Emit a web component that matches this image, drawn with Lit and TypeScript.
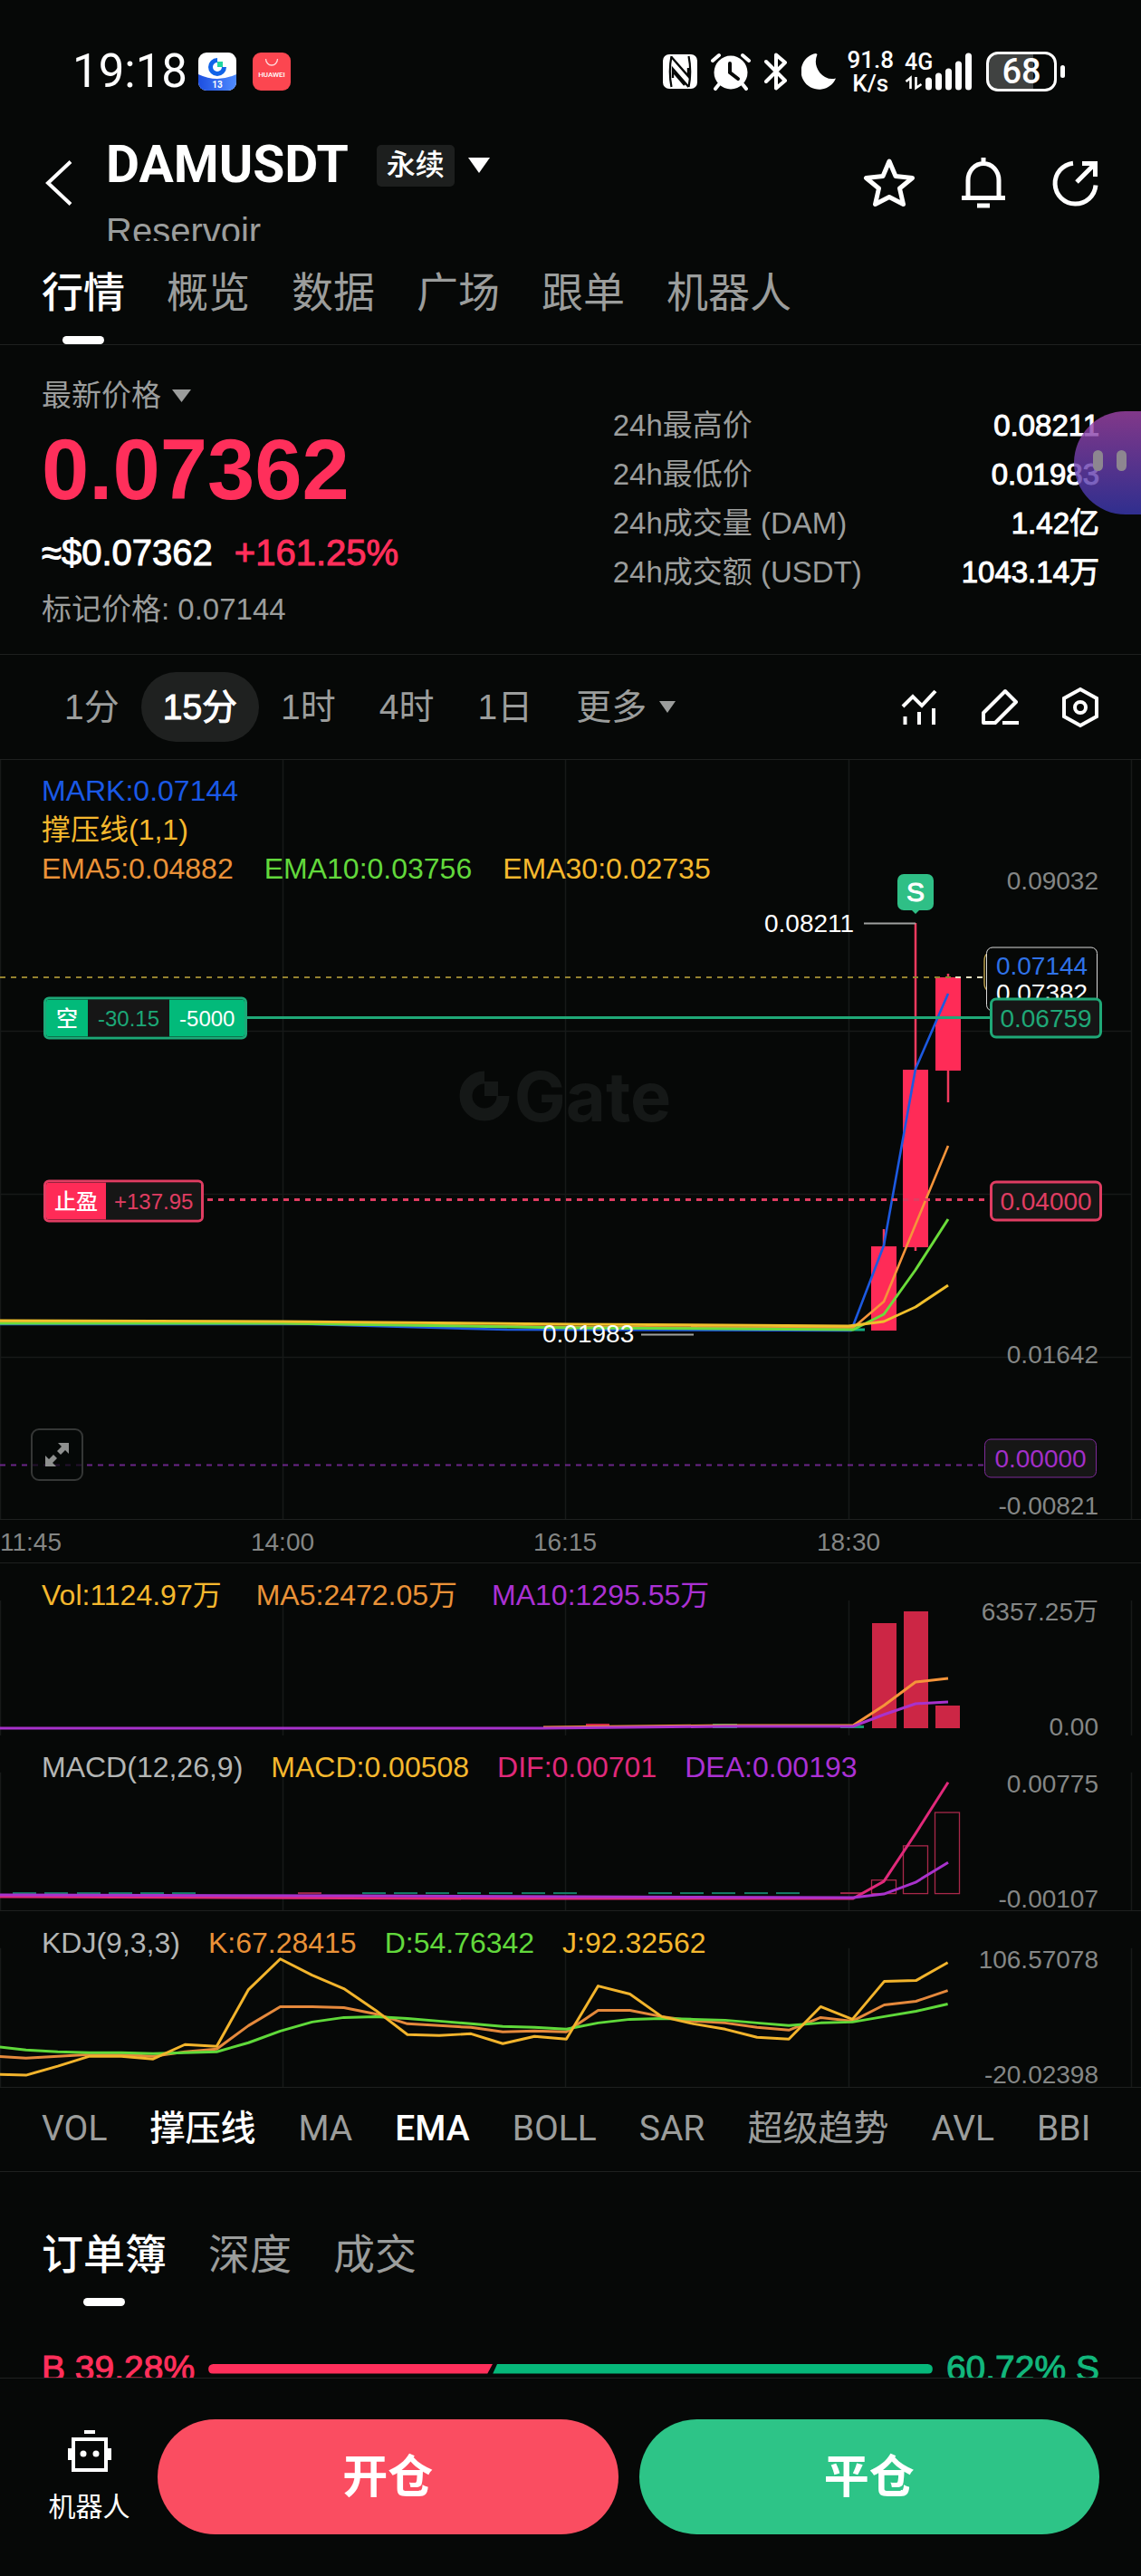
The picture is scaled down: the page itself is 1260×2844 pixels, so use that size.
import { LitElement, html, svg, css, nothing } from "lit";
import { customElement, state } from "lit/decorators.js";
import { classMap } from "lit/directives/class-map.js";
import { styleMap } from "lit/directives/style-map.js";

type Point = [number, number];

const points = (list: Point[]) => list.map((p) => p.join(",")).join(" ");

/* Horizontal distance between two candles, and the centre of the newest one. */
const STEP = 35.1;
const LAST_X = 1046.6;
const series = (values: number[]): Point[] =>
  values.map((y, i) => [Math.round((LAST_X - STEP * (values.length - 1 - i)) * 10) / 10, y]);

const GRID_X = [0, 312, 624, 937, 1249];

interface Candle { x: number; top: number; bottom: number; high: number; low: number }
const CANDLES: Candle[] = [
  { x: 976, top: 537, bottom: 630, high: 518, low: 630 },
  { x: 1011, top: 342, bottom: 538, high: 180, low: 542 },
  { x: 1047, top: 240, bottom: 343, high: 236, low: 378 },
];

const VOLUME_BARS = [
  { x: 976, top: 66 },
  { x: 1011, top: 53 },
  { x: 1046, top: 157 },
];

const MACD_BARS = [
  { x: 976, top: 160 },
  { x: 1011, top: 122 },
  { x: 1046, top: 85 },
];
const MACD_GREEN = [14, 49, 85, 120, 155, 190, 400, 435, 470, 505, 540, 576, 611, 716, 751, 786, 822, 857];
const MACD_RED = [329, 928];

const KDJ_J = series([181, 182, 172, 161, 161, 164, 148, 150, 87, 53, 71, 86, 110, 137, 138, 136, 147, 139, 142, 83, 92, 117, 125, 131, 140, 142, 106, 120, 78, 77, 57]);
const KDJ_K = series([161, 163, 161, 159, 159, 161, 156, 153, 127, 106, 106, 107, 114, 125, 127, 129, 134, 133, 134, 110, 110, 117, 122, 124, 129, 132, 118, 122, 104, 100, 88]);
const KDJ_D = series([150, 154, 156, 157, 157, 158, 157, 156, 146, 133, 123, 118, 117, 119, 122, 125, 128, 129, 131, 124, 120, 119, 120, 121, 124, 127, 124, 123, 117, 111, 103]);

interface Legend { text: string; tone: string }

@customElement("app-root")
export class AppRoot extends LitElement {
  @state() private page = "行情";
  @state() private interval = "15分";
  @state() private book = "订单簿";
  @state() private indicators = ["撑压线", "EMA"];

  static styles = css`
    :host {
      display: block;
      min-height: 100vh;
      background: #060807;
      color: #fff;
      font-family: "Liberation Sans", "Noto Sans CJK SC", sans-serif;
      font-size: 33px;
      line-height: 40px;
      overflow-x: hidden;
    }
    * { box-sizing: border-box; }
    button, a { font: inherit; color: inherit; text-decoration: none; }
    button { background: none; border: 0; padding: 0; margin: 0; cursor: pointer; }
    h1, p, dl, dd, dt { margin: 0; font: inherit; }
    svg { display: block; flex: none; }
    .row { display: flex; align-items: center; }
    .medium { -webkit-text-stroke: 1px currentColor; }
    .gray { color: #9b9d9c; }
    .red { color: #ff2f5b; }

    .status {
      height: 138px;
      padding: 56px 84px 36px 80px;
      display: flex;
      justify-content: space-between;
      font-family: Roboto, sans-serif;
    }
    .status-side { display: flex; align-items: center; height: 46px; }
    .clock { font-size: 51px; line-height: 46px; margin-right: 12px; }
    .app-icons { display: flex; gap: 18px; }
    .status-icons { display: flex; align-items: center; gap: 15px; }
    .rate { font-size: 26px; line-height: 26px; text-align: center; font-weight: 500; margin: 0 12px; }
    .signal { display: flex; align-items: center; margin-right: 14px; position: relative; }
    .network { position: absolute; left: 0; top: 0; font-size: 25px; line-height: 22px; font-weight: 500; }
    .battery { display: flex; align-items: center; gap: 4px; }
    .battery-shell {
      width: 78px; height: 44px; border: 3px solid #fff; border-radius: 13px;
      background: linear-gradient(90deg, #404241 68%, #060807 68%);
      font-size: 38px; line-height: 38px; font-weight: 500; text-align: center;
    }
    .battery-tip { width: 5px; height: 14px; border-radius: 3px; background: #fff; }

    .header { display: flex; height: 128px; padding: 0 47px 0 49px; align-items: center; }
    .names { align-self: flex-start; padding: 16px 0 0 36px; flex: 1; overflow: hidden; height: 100%; }
    .title { display: flex; align-items: center; height: 56px; }
    .symbol { font-family: Roboto, sans-serif; font-weight: 700; font-size: 57px; line-height: 56px; }
    .badge {
      margin: 2px 15px 0 31px; height: 46px; padding: 0 11px; border-radius: 5px; background: #1d1f1e;
      font-size: 32px; line-height: 44px; font-weight: 500;
    }
    .alias { margin-top: 22px; height: 34px; overflow: hidden; font-size: 40px; line-height: 46px; color: #9b9d9c; }
    .header-actions { display: flex; gap: 51px; align-items: center; }

    .tabs { display: flex; gap: 46px; padding: 0 46px; height: 114px; }
    .tab { position: relative; font-size: 46px; line-height: 112px; color: #9b9d9c; white-space: nowrap; font-weight: 400; }
    .tab.on { color: #fff; font-weight: 500; }
    .tab.on::after {
      content: ""; position: absolute; left: 50%; bottom: 0; width: 46px; height: 9px;
      margin-left: -23px; border-radius: 5px; background: #fff;
    }
    .ruled { border-bottom: 1px solid #1e201f; }

    .quote {
      position: relative; display: grid; grid-template-columns: 54fr 46fr;
      padding: 36px 46px 29px;
    }
    .quote-kind { display: flex; align-items: center; gap: 12px; height: 40px; font-size: 33px; }
    .price { margin: 14px 0 20px; font-size: 94px; line-height: 96px; font-weight: 700; }
    .change { display: flex; gap: 24px; font-size: 40px; line-height: 46px; margin-bottom: 20px; }
    .stats { padding-top: 26px; }
    .stat { display: flex; justify-content: space-between; line-height: 54px; }
    .bubble {
      position: absolute; right: 0; top: 73px; width: 74px; height: 114px;
      border-radius: 57px 0 0 57px;
      background: linear-gradient(180deg, rgba(160, 68, 170, 0.8), rgba(58, 56, 176, 0.8));
      display: flex; align-items: center; gap: 15px; padding: 0 0 5px 21px;
    }
    .eye { width: 11px; height: 23px; border-radius: 6px; background: #8d8690; }

    .intervals { display: flex; align-items: center; justify-content: space-between; height: 116px; padding: 0 47px; }
    .interval { height: 77px; padding: 0 24px; border-radius: 39px; font-size: 39px; color: #9b9d9c; display: inline-flex; align-items: center; gap: 14px; }
    .interval.on { background: #1f2120; color: #fff; }
    .tools { display: flex; gap: 48px; }

    .panel { position: relative; }
    .panel .plot { position: absolute; left: 0; top: 0; width: 100%; height: 100%; }
    .legends { position: relative; padding: 15px 46px 0; font-size: 32px; }
    .legend { display: flex; gap: 34px; line-height: 40px; }
    .legend-rows { padding-top: 13px; }
    .legend-rows .legend { line-height: 43px; }
    .volume-panel .legend { gap: 38px; }
    .macd-panel .legend, .kdj-panel .legend { gap: 31px; }
    .blue { color: #1a59e6; }
    .gold { color: #f5b82e; }
    .orange { color: #ea9238; }
    .green { color: #62d93c; }
    .violet { color: #ab31d4; }
    .pink { color: #e0297a; }
    .light { color: #b4b6b5; }
    .scale { position: absolute; right: 47px; font-size: 28px; line-height: 28px; margin-top: -14px; color: #848685; }

    .price-panel { height: 839px; }
    .mark { position: absolute; transform: translateY(-50%); display: flex; align-items: center; font-size: 28px; line-height: 28px; }
    .price-box { right: 43px; width: 124px; height: 45px; justify-content: center; border: 3px solid; border-radius: 7px; background: #161616; }
    .price-box.thin { right: 49px; border-width: 1px; }
    .price-box.up { color: #1fa877; }
    .price-box.down { color: #e03d62; }
    .price-box.zero { color: #a32fc9; border-color: #7d2a98; height: 43px; }
    .twin { right: 48px; width: 123px; height: 71px; border: 1px solid #d9d9d9; border-radius: 7px; background: #060807; flex-direction: column; padding-top: 6px; gap: 2px; }
    .twin .last { color: #2f72e8; }
    .tag { left: 48px; height: 47px; border: 3px solid; border-radius: 6px; font-size: 24px; overflow: hidden; }
    .tag span { display: flex; align-items: center; height: 100%; padding: 0 9px; }
    .tag .solid { color: #fff; font-weight: 500; }
    .tag .hollow { background: #161616; }
    .tag.up { color: #1ca877; }
    .tag.up span { padding: 0 11px; }
    .tag.up .solid { background: #02ba7a; }
    .tag.down { color: #e03d62; }
    .tag.down .solid { background: #ff2b57; }
    .sell {
      left: 991px; top: 146px; width: 40px; height: 40px; border-radius: 7px; background: #2fbf86;
      justify-content: center; font-size: 30px;
    }
    .sell::after {
      content: ""; position: absolute; left: 15px; top: 39px;
      border: 5px solid transparent; border-top-color: #2fbf86; border-bottom: 0;
    }
    .watermark { position: absolute; left: 0; right: 0; top: 329px; height: 84px; display: flex; align-items: center; justify-content: center; gap: 5px; padding-right: 12px; color: #151817; font: 700 76px/84px Inter, sans-serif; }
    .expand {
      position: absolute; left: 34px; top: 738px; width: 58px; height: 58px; border: 2px solid #353736; border-radius: 9px;
      background: rgba(6, 8, 7, 0.7); display: flex; align-items: center; justify-content: center;
    }
    .times { position: relative; height: 48px; font-size: 28px; line-height: 49px; color: #848685; }
    .time { position: absolute; top: 0; transform: translateX(-50%); }
    .time.first { transform: none; }

    .volume-panel { height: 190px; }
    .macd-panel { height: 194px; }
    .kdj-panel { height: 195px; }

    .indicators { display: flex; align-items: center; gap: 47px; height: 93px; padding: 0 46px 2px; overflow: hidden; font-family: Roboto, "Noto Sans CJK SC", sans-serif; font-size: 39px; color: #9b9d9c; white-space: nowrap; }
    .indicator { flex: none; }
    .indicator.on { color: #fff; font-weight: 500; }

    .book { padding-top: 34px; }
    .depth-clip { margin-top: 45px; height: 34px; overflow: hidden; }
    .depth { display: flex; align-items: center; height: 48px; padding: 0 46px; gap: 15px; font-size: 39px; line-height: 48px; white-space: nowrap; }
    .depth-bar { flex: 1; display: flex; height: 11px; gap: 0; }
    .buy { background: #ff2f5b; border-radius: 6px 0 0 6px; clip-path: polygon(0 0, 100% 0, calc(100% - 6px) 100%, 0 100%); }
    .sell-side { flex: 1; background: #06b87a; border-radius: 0 6px 6px 0; clip-path: polygon(5px 0, 100% 0, 100% 100%, 0 100%); }
    .teal { color: #12b77c; }

    .dock { display: flex; align-items: center; gap: 23px; padding: 45px 46px 46px 46px; border-top: 1px solid #1e201f; }
    .bot { display: flex; flex-direction: column; align-items: center; width: 105px; gap: 18px; font-size: 30px; }
    .cta { flex: 1; height: 127px; border-radius: 64px; font-size: 50px; font-weight: 700; color: #fff; background: #fa4d61; }
    .cta.close { background: #2dc487; }
  `;

  private caret(width: number, height: number, color: string) {
    return html`<svg width=${width} height=${height} viewBox="0 0 10 10" preserveAspectRatio="none" aria-hidden="true">
      <path d="M0 0H10L5 10Z" fill=${color}></path></svg>`;
  }

  private gridLines(from: number, to: number) {
    return svg`${GRID_X.map((x) => svg`<path d=${`M${x + 0.5} ${from}V${to}`} stroke="#171918" stroke-width="1.5"></path>`)}`;
  }

  private line(list: Point[], color: string, width = 3) {
    return svg`<polyline points=${points(list)} fill="none" stroke=${color} stroke-width=${width} stroke-linejoin="round"></polyline>`;
  }

  private legend(items: Legend[]) {
    return html`<div class="legend">${items.map((i) => html`<span class=${i.tone}>${i.text}</span>`)}</div>`;
  }

  private scale(text: string, y: number) {
    return html`<span class="scale" style=${styleMap({ top: `${y}px` })}>${text}</span>`;
  }

  private tabs(names: string[], current: string, pick: (name: string) => void) {
    return html`${names.map((name) => html`<button
      class=${classMap({ tab: true, on: name === current })} role="tab" aria-selected=${name === current}
      @click=${() => pick(name)}>${name}</button>`)}`;
  }

  private toggle(name: string) {
    this.indicators = this.indicators.includes(name)
      ? this.indicators.filter((n) => n !== name)
      : [...this.indicators, name];
  }

  private renderStatus() {
    return html`
      <div class="status">
        <div class="status-side">
          <span class="clock">19:18</span>
          <div class="app-icons">
            <svg width="42" height="42" viewBox="0 0 42 42" aria-hidden="true">
              <defs><clipPath id="tile"><rect width="42" height="42" rx="9"></rect></clipPath>
              <linearGradient id="sea"><stop stop-color="#1d4fe0"></stop><stop offset="1" stop-color="#4f8bff"></stop></linearGradient></defs>
              <g clip-path="url(#tile)"><rect width="42" height="42" fill="#fff"></rect>
              <path d="M0 24Q21 34 42 24V42H0Z" fill="url(#sea)"></path></g>
              <path d="M21 8.500A7.500 7.500 0 1 0 28.500 16" fill="none" stroke="#1164e8" stroke-width="5"></path>
              <rect x="21" y="10" width="6" height="6" fill="#22d6a0"></rect>
              <text x="21" y="39" text-anchor="middle" font-size="10" font-weight="700" font-family="Roboto" fill="#fff">13</text>
            </svg>
            <svg width="42" height="42" viewBox="0 0 42 42" aria-hidden="true">
              <rect width="42" height="42" rx="9" fill="#fc4650"></rect>
              <path d="M14.500 7a6.500 7 0 0 0 13 0" fill="none" stroke="#ffd9db" stroke-width="1.300"></path>
              <text x="21" y="27" text-anchor="middle" font-size="8" font-weight="500" font-family="Roboto" fill="#fff">HUAWEI</text>
            </svg>
          </div>
        </div>
        <div class="status-side">
          <div class="status-icons">
            <svg width="38" height="38" viewBox="0 0 38 38" aria-hidden="true">
              <rect width="38" height="38" rx="7" fill="#fff"></rect>
              <path d="M9.500 2C7.500 12 7.500 26 9.500 36M28.500 2C30.500 12 30.500 26 28.500 36" fill="none" stroke="#060807" stroke-width="2.200"></path>
              <path d="M9.500 3L28 24V15M28.500 36L11 16V26M12 20L24 34" fill="none" stroke="#060807" stroke-width="2.400"></path>
            </svg>
            <svg width="44" height="42" viewBox="0 0 44 42" aria-hidden="true">
              <circle cx="22" cy="22" r="18.500" fill="#fff"></circle>
              <path d="M2 9L9 3M42 9L35 3M9 35L5 40M35 35L39 40" stroke="#fff" stroke-width="4" stroke-linecap="round"></path>
              <path d="M21 12V22L30 29" fill="none" stroke="#060807" stroke-width="4" stroke-linecap="round"></path>
            </svg>
            <svg width="26" height="42" viewBox="0 0 26 42" aria-hidden="true">
              <path d="M2 10L23 31L13 39.500V2.500L23 11L2 32" fill="none" stroke="#fff" stroke-width="4" stroke-linejoin="round" stroke-linecap="round"></path>
            </svg>
            <svg width="38" height="40" viewBox="0 0 38 40" aria-hidden="true">
              <path d="M16 0A20 20 0 1 0 38 27.500Q28 30 20.500 21.500Q13 12 17.500 1Z" fill="#fff"></path>
            </svg>
          </div>
          <div class="rate"><div>91.8</div><div>K/s</div></div>
          <div class="signal">
            <span class="network">4G</span>
            <svg width="76" height="42" viewBox="0 0 76 42" aria-hidden="true">
              <path d="M26.500 31V38M37.500 26V38M48.500 21V38M59.500 13V38M70.500 4V38" stroke="#fff" stroke-width="7" stroke-linecap="round"></path>
              <path d="M1.500 32L6.500 28V40M18.500 35L12.500 39V27" fill="none" stroke="#fff" stroke-width="2.600"></path>
            </svg>
          </div>
          <div class="battery"><div class="battery-shell">68</div><div class="battery-tip"></div></div>
        </div>
      </div>`;
  }

  private renderHeader() {
    return html`
      <header class="header">
        <button aria-label="返回">
          <svg width="32" height="50" viewBox="0 0 32 50"><path d="M29 1.500L4 25L29 48.500" fill="none" stroke="#fff" stroke-width="4"></path></svg>
        </button>
        <div class="names">
          <div class="title">
            <h1 class="symbol">DAMUSDT</h1>
            <span class="badge">永续</span>
            ${this.caret(24, 17, "#fff")}
          </div>
          <p class="alias">Reservoir</p>
        </div>
        <div class="header-actions">
          <button aria-label="收藏"><svg width="58" height="58" viewBox="0 0 58 58">
            <path d="M29 5L36 21.500L54.500 23.500L40.500 35L44.500 52.500L29 44.500L13.500 52.500L17.500 35L3.500 23.500L22 21.500Z" fill="none" stroke="#fff" stroke-width="5" stroke-linejoin="round"></path></svg></button>
          <button aria-label="提醒"><svg width="48" height="58" viewBox="0 0 48 58">
            <path d="M24 1V7M7 45V26A17 18.500 0 0 1 41 26V45M0 45.500H48M17 54H31" fill="none" stroke="#fff" stroke-width="5"></path></svg></button>
          <button aria-label="分享"><svg width="52" height="54" viewBox="0 0 52 54">
            <path d="M24 5.200A22.500 22.500 0 1 0 49 29.500M28 26L47 7M34 5.500H48.500V20" fill="none" stroke="#fff" stroke-width="5"></path></svg></button>
        </div>
      </header>`;
  }

  private renderQuote() {
    const stats = [
      ["24h最高价", "0.08211"],
      ["24h最低价", "0.01983"],
      ["24h成交量 (DAM)", "1.42亿"],
      ["24h成交额 (USDT)", "1043.14万"],
    ];
    return html`
      <section class="quote ruled">
        <div>
          <button class="quote-kind gray">最新价格 ${this.caret(21, 14, "#9b9d9c")}</button>
          <p class="price red">0.07362</p>
          <p class="change medium"><span>≈$0.07362</span><span class="red">+161.25%</span></p>
          <p class="gray">标记价格: 0.07144</p>
        </div>
        <dl class="stats">
          ${stats.map(([k, v]) => html`<div class="stat"><dt class="gray">${k}</dt><dd class="medium">${v}</dd></div>`)}
        </dl>
        <div class="bubble"><span class="eye"></span><span class="eye"></span></div>
      </section>`;
  }

  private renderIntervals() {
    const names = ["1分", "15分", "1时", "4时", "1日", "更多"];
    return html`
      <nav class="intervals ruled">
        <div class="row">
          ${names.map((name) => html`<button
            class=${classMap({ interval: true, on: name === this.interval, medium: name === this.interval })}
            @click=${() => (this.interval = name)}>${name}${name === "更多" ? this.caret(18, 13, "#9b9d9c") : nothing}</button>`)}
        </div>
        <div class="tools">
          <button aria-label="指标"><svg width="40" height="42" viewBox="0 0 40 42">
            <path d="M2 20L13 9L23 19L38 3M4.500 31V40M20 26V40M36 22V40" fill="none" stroke="#fff" stroke-width="4"></path></svg></button>
          <button aria-label="画线"><svg width="42" height="42" viewBox="0 0 42 42">
            <path d="M3 38V27L27 3L39 15L16 38ZM24 38H42" fill="none" stroke="#fff" stroke-width="4" stroke-linejoin="round"></path></svg></button>
          <button aria-label="设置"><svg width="40" height="46" viewBox="0 0 40 46">
            <path d="M20 3L38 13V33L20 43L2 33V13Z" fill="none" stroke="#fff" stroke-width="4"></path>
            <circle cx="20" cy="23" r="6" fill="none" stroke="#fff" stroke-width="4"></circle></svg></button>
        </div>
      </nav>`;
  }

  private renderPricePanel() {
    return html`
      <div class="panel price-panel ruled">
        <div class="watermark">
          <svg width="56" height="56" viewBox="0 0 56 56" aria-hidden="true">
            <path d="M28 7.500A20.500 20.500 0 1 0 48.500 28" fill="none" stroke="#151817" stroke-width="14"></path>
            <rect x="28" y="12" width="15" height="16" fill="#151817"></rect></svg>
          <span>Gate</span>
        </div>
        <svg class="plot" viewBox="0 0 1260 838" preserveAspectRatio="none" aria-hidden="true">
          ${this.gridLines(0, 838)}
          ${[299, 479, 659].map((y) => svg`<path d=${`M0 ${y + 0.5}H1249`} stroke="#171918" stroke-width="1.5"></path>`)}
          <path d="M0 778.500H1088" stroke="#6a2588" stroke-width="2" stroke-dasharray="6 6"></path>
          ${CANDLES.map((c) => svg`
            <path d=${`M${c.x} ${c.high}V${c.low}`} stroke="#f23a5e" stroke-width="2.5"></path>
            <rect x=${c.x - 14} y=${c.top} width="28" height=${c.bottom - c.top} fill="#ff2b57"></rect>`)}
          <path d="M0 240H1050" stroke="#94822f" stroke-width="2" stroke-dasharray="6 6"></path>
          <path d="M1055 240H1088" stroke="#e8e2c0" stroke-width="2" stroke-dasharray="6 6"></path>
          <path d="M954 180.500H1011M708 634.500H766" stroke="#9fa1a0" stroke-width="2"></path>
          ${this.line([[0, 623], [340, 623], [560, 629], [940, 630], [976, 536], [1011, 341], [1047, 258]], "#1c59e0", 2.6)}
          <path d="M940 629H955" stroke="#14b183" stroke-width="3"></path>
          ${this.line([[0, 621], [312, 622], [630, 626], [942, 627], [976, 598], [1011, 513], [1047, 426]], "#f5943a", 2.6)}
          ${this.line([[0, 622], [312, 622], [630, 627], [942, 629], [976, 612], [1011, 563], [1047, 507]], "#6bdc3a", 3)}
          ${this.line([[0, 619], [312, 620], [630, 623], [937, 625], [976, 620], [1011, 604], [1047, 580]], "#f0bf2c", 3)}
          <path d="M272 284.500H1094" stroke="#1fa877" stroke-width="3"></path>
          <path d="M229 485.500H1090" stroke="#e03d62" stroke-width="3" stroke-dasharray="6 6"></path>
          <path d="M1090 214Q1087 216 1087 222V246Q1087 252 1090 254" fill="none" stroke="#b59a4a" stroke-width="1.500"></path>
        </svg>
        <div class="legends legend-rows">
          ${this.legend([{ text: "MARK:0.07144", tone: "blue" }])}
          ${this.legend([{ text: "撑压线(1,1)", tone: "gold" }])}
          ${this.legend([
            { text: "EMA5:0.04882", tone: "orange" },
            { text: "EMA10:0.03756", tone: "green" },
            { text: "EMA30:0.02735", tone: "gold" },
          ])}
        </div>
        ${this.scale("0.09032", 134)} ${this.scale("0.01642", 657)} ${this.scale("-0.00821", 824)}
        <div class="mark" style=${styleMap({ left: "844px", top: "181px" })}>0.08211</div>
        <div class="mark" style=${styleMap({ left: "599px", top: "634px" })}>0.01983</div>
        <div class="mark sell medium">S</div>
        <div class="mark twin" style=${styleMap({ top: "242px" })}><span class="last">0.07144</span><span>0.07382</span></div>
        <div class="mark price-box up" style=${styleMap({ top: "285px" })}>0.06759</div>
        <div class="mark price-box down" style=${styleMap({ top: "487px" })}>0.04000</div>
        <div class="mark price-box thin zero" style=${styleMap({ top: "771px" })}>0.00000</div>
        <div class="mark tag up" style=${styleMap({ top: "285px" })}>
          <span class="solid">空</span><span class="hollow">-30.15</span><span class="solid">-5000</span>
        </div>
        <div class="mark tag down" style=${styleMap({ top: "487px" })}>
          <span class="solid">止盈</span><span class="hollow">+137.95</span>
        </div>
        <button class="expand" aria-label="全屏"><svg width="30" height="30" viewBox="0 0 30 30">
          <path d="M16 2H28V14L24 10L19 15L15 11L20 6ZM2 16L6 20L11 15L15 19L10 24L14 28H2Z" fill="#8e908f"></path></svg></button>
      </div>
      <div class="times ruled">
        <span class="time first">11:45</span>
        ${["14:00", "16:15", "18:30"].map((t, i) => html`<span class="time" style=${styleMap({ left: `${(GRID_X[i + 1] / 1260) * 100}%` })}>${t}</span>`)}
      </div>`;
  }

  private renderStudies() {
    return html`
      <div class="panel volume-panel">
        <svg class="plot" viewBox="0 0 1260 190" preserveAspectRatio="none" aria-hidden="true">
          ${this.gridLines(41, 190)}
          <rect x="647" y="177" width="26" height="5" fill="#cc2645"></rect>
          <rect x="787" y="177" width="27" height="5" fill="#159a6c"></rect>
          <rect x="928" y="179" width="26" height="3" fill="#159a6c"></rect>
          ${VOLUME_BARS.map((b) => svg`<rect x=${b.x - 13} y=${b.top} width="27" height=${182 - b.top} fill="#cc2645"></rect>`)}
          ${this.line([[600, 181], [800, 179], [942, 179], [976, 157], [1011, 131], [1047, 127]], "#f5943a")}
          ${this.line([[0, 182], [600, 182], [800, 180], [942, 180], [976, 167], [1011, 155], [1047, 153]], "#a832cc")}
        </svg>
        <div class="legends">${this.legend([
          { text: "Vol:1124.97万", tone: "gold" },
          { text: "MA5:2472.05万", tone: "orange" },
          { text: "MA10:1295.55万", tone: "violet" },
        ])}</div>
        ${this.scale("6357.25万", 54)} ${this.scale("0.00", 181)}
      </div>
      <div class="panel macd-panel ruled">
        <svg class="plot" viewBox="0 0 1260 194" preserveAspectRatio="none" aria-hidden="true">
          ${this.gridLines(41, 194)}
          ${MACD_GREEN.map((x) => svg`<rect x=${x} y="174" width="26" height="2" fill="#15806a"></rect>`)}
          ${MACD_RED.map((x) => svg`<rect x=${x} y="174" width="26" height="2" fill="#a02848"></rect>`)}
          ${MACD_BARS.map((b) => svg`<rect x=${b.x - 13.5} y=${b.top + 0.5} width="27" height=${175 - b.top} fill="none" stroke="#a8284a" stroke-width="1.3"></rect>`)}
          ${this.line([[0, 179], [560, 181], [942, 181], [976, 162], [1011, 109], [1047, 52]], "#e0297a")}
          ${this.line([[0, 177], [400, 178], [942, 180], [976, 176], [1011, 163], [1047, 141]], "#a832cc")}
        </svg>
        <div class="legends">${this.legend([
          { text: "MACD(12,26,9)", tone: "light" },
          { text: "MACD:0.00508", tone: "gold" },
          { text: "DIF:0.00701", tone: "pink" },
          { text: "DEA:0.00193", tone: "violet" },
        ])}</div>
        ${this.scale("0.00775", 54)} ${this.scale("-0.00107", 181)}
      </div>
      <div class="panel kdj-panel ruled">
        <svg class="plot" viewBox="0 0 1260 195" preserveAspectRatio="none" aria-hidden="true">
          ${this.gridLines(41, 195)}
          ${this.line(KDJ_K, "#e5893c")} ${this.line(KDJ_D, "#5fd93a")} ${this.line(KDJ_J, "#f2b42c")}
        </svg>
        <div class="legends">${this.legend([
          { text: "KDJ(9,3,3)", tone: "light" },
          { text: "K:67.28415", tone: "orange" },
          { text: "D:54.76342", tone: "green" },
          { text: "J:92.32562", tone: "gold" },
        ])}</div>
        ${this.scale("106.57078", 54)} ${this.scale("-20.02398", 181)}
      </div>`;
  }

  render() {
    const studies = ["VOL", "撑压线", "MA", "EMA", "BOLL", "SAR", "超级趋势", "AVL", "BBI"];
    return html`
      ${this.renderStatus()}
      ${this.renderHeader()}
      <nav class="ruled"><div class="tabs" role="tablist">
        ${this.tabs(["行情", "概览", "数据", "广场", "跟单", "机器人"], this.page, (n) => (this.page = n))}
      </div></nav>
      ${this.renderQuote()}
      ${this.renderIntervals()}
      ${this.renderPricePanel()}
      ${this.renderStudies()}
      <div class="indicators ruled">
        ${studies.map((n) => html`<button class=${classMap({ indicator: true, on: this.indicators.includes(n) })}
          @click=${() => this.toggle(n)}>${n}</button>`)}
      </div>
      <section class="book">
        <div class="tabs" role="tablist">
          ${this.tabs(["订单簿", "深度", "成交"], this.book, (n) => (this.book = n))}
        </div>
        <div class="depth-clip"><div class="depth">
          <span class="red medium">B 39.28%</span>
          <div class="depth-bar"><div class="buy" style=${styleMap({ width: "39.28%" })}></div><div class="sell-side"></div></div>
          <span class="teal medium">60.72% S</span>
        </div></div>
      </section>
      <footer class="dock">
        <a class="bot" href="#bots">
          <svg width="50" height="48" viewBox="0 0 50 48" aria-hidden="true">
            <path d="M19 3H31M7 11H43V45H7ZM3 21V34M47 21V34" fill="none" stroke="#fff" stroke-width="4"></path>
            <circle cx="18" cy="27" r="3.500" fill="#fff"></circle><circle cx="32" cy="27" r="3.500" fill="#fff"></circle></svg>
          <span>机器人</span>
        </a>
        <button class="cta">开仓</button>
        <button class="cta close">平仓</button>
      </footer>`;
  }
}
